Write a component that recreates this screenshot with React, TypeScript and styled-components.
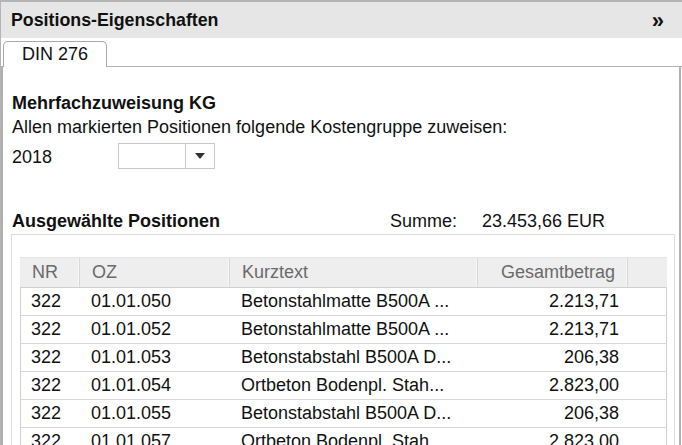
import React from 'react';
import styled, { createGlobalStyle } from 'styled-components';

const GlobalStyle = createGlobalStyle`
  html, body {
    margin: 0;
    padding: 0;
    background: #ffffff;
    overflow: hidden;
  }
  body {
    font-family: "Liberation Sans", Arial, sans-serif;
    font-size: 18px;
    color: #111;
  }
`;

const Frame = styled.div`
  width: 682px;
  height: 445px;
  box-sizing: border-box;
  border-top: 2px solid #b4b4b4;
  border-left: 1px solid #b4b4b4;
  display: flex;
  flex-direction: column;
  overflow: hidden;
`;

const TitleBar = styled.div`
  height: 36px;
  flex: none;
  background: #e6e6e6;
  display: flex;
  align-items: center;
  justify-content: space-between;
  padding: 0 18px 0 10px;
`;

const Title = styled.h1`
  margin: 0;
  font-size: 17.8px;
  font-weight: bold;
  color: #111;
`;

const Collapse = styled.span`
  font-size: 22px;
  font-weight: bold;
  line-height: 1;
  margin-top: 1px;
`;

const TabStrip = styled.div`
  flex: none;
  height: 28px;
  display: flex;
  align-items: flex-end;
  padding-left: 2px;
  border-bottom: 1px solid #b0b0b0;
`;

type TabProps = { $active?: boolean };

const Tab = styled.div<TabProps>`
  width: 104px;
  height: 26px;
  box-sizing: border-box;
  border: 1px solid #aaaaaa;
  border-bottom: none;
  border-radius: 5px 5px 0 0;
  background: ${(p) => (p.$active ? '#ffffff' : '#eeeeee')};
  padding-left: 18px;
  line-height: 24px;
  margin-bottom: -1px;
`;

const Content = styled.div`
  flex: 1;
  border-left: 2px solid #b0b0b0;
  border-right: 2px solid #b0b0b0;
  margin-right: 1px;
  padding: 26px 0 0 9px;
`;

const SectionTitle = styled.div`
  font-weight: bold;
  line-height: 20px;
`;

const Hint = styled.div`
  line-height: 20px;
  margin-top: 4px;
`;

const FieldRow = styled.div`
  display: flex;
  align-items: center;
  height: 26px;
  margin-top: 6px;
`;

const FieldLabel = styled.span`
  width: 106px;
  line-height: 20px;
  margin-top: 2px;
`;

const Select = styled.div`
  width: 97px;
  height: 26px;
  box-sizing: border-box;
  border: 1px solid #c8c8c8;
  display: flex;
`;

const SelectValue = styled.div`
  flex: 1;
  border-right: 1px solid #c8c8c8;
`;

const SelectButton = styled.div`
  width: 28px;
  display: flex;
  align-items: center;
  justify-content: center;
`;

const Summary = styled.div`
  display: flex;
  align-items: baseline;
  line-height: 20px;
  margin-top: 42px;
`;

const SummaryTitle = styled.span`
  font-weight: bold;
  width: 378px;
`;

const SummaryLabel = styled.span`
  width: 92px;
`;

const GridBox = styled.div`
  margin: 3px 0 0 -1px;
  width: 664px;
  height: 240px;
  box-sizing: border-box;
  border: 1px solid #dcdcdc;
  padding: 22px 7px 0 8px;
`;

const Cols = '60px 150px 248px 150px 1fr';

const HeaderRow = styled.div`
  display: grid;
  grid-template-columns: ${Cols};
  height: 30px;
  background: #eeeeee;
  border-top: 1px solid #e4e4e4;
  box-sizing: border-box;
`;

type CellProps = { $right?: boolean };

const HeadCell = styled.div<CellProps>`
  color: #6a6a6a;
  line-height: 29px;
  padding: 0 ${(p) => (p.$right ? '12px' : '0')} 0 12px;
  text-align: ${(p) => (p.$right ? 'right' : 'left')};
  border-right: 1px solid #d6d6d6;
  box-shadow: inset -1px 0 0 #f8f8f8;
  &:last-child {
    border-right: none;
    box-shadow: none;
  }
`;

const Body = styled.div`
  border: 1px solid #d0d0d0;
  border-bottom: none;
`;

const Row = styled.div`
  display: grid;
  grid-template-columns: ${Cols};
  height: 28px;
  box-sizing: border-box;
  border-bottom: 1px solid #d8d8d8;
  margin-left: -1px;
  margin-right: -1px;
`;

const Cell = styled.div<CellProps>`
  line-height: 27px;
  padding: 0 ${(p) => (p.$right ? '9px' : '0')} 0 11px;
  text-align: ${(p) => (p.$right ? 'right' : 'left')};
  white-space: nowrap;
  overflow: hidden;
`;

const rows = [
  ['322', '01.01.050', 'Betonstahlmatte B500A ...', '2.213,71'],
  ['322', '01.01.052', 'Betonstahlmatte B500A ...', '2.213,71'],
  ['322', '01.01.053', 'Betonstabstahl B500A D...', '206,38'],
  ['322', '01.01.054', 'Ortbeton Bodenpl. Stah...', '2.823,00'],
  ['322', '01.01.055', 'Betonstabstahl B500A D...', '206,38'],
  ['322', '01.01.057', 'Ortbeton Bodenpl. Stah...', '2.823,00'],
];

const App = () => (
  <>
    <GlobalStyle />
    <Frame>
      <TitleBar>
        <Title>Positions-Eigenschaften</Title>
        <Collapse>»</Collapse>
      </TitleBar>
      <TabStrip>
        <Tab $active>DIN 276</Tab>
      </TabStrip>
      <Content>
        <SectionTitle>Mehrfachzuweisung KG</SectionTitle>
        <Hint>Allen markierten Positionen folgende Kostengruppe zuweisen:</Hint>
        <FieldRow>
          <FieldLabel>2018</FieldLabel>
          <Select>
            <SelectValue />
            <SelectButton>
              <svg width="10" height="6" viewBox="0 0 10 6">
                <path d="M0 0h10L5 6z" fill="#333" />
              </svg>
            </SelectButton>
          </Select>
        </FieldRow>
        <Summary>
          <SummaryTitle>Ausgewählte Positionen</SummaryTitle>
          <SummaryLabel>Summe:</SummaryLabel>
          <span>23.453,66 EUR</span>
        </Summary>
        <GridBox>
          <HeaderRow>
            <HeadCell>NR</HeadCell>
            <HeadCell>OZ</HeadCell>
            <HeadCell>Kurztext</HeadCell>
            <HeadCell $right>Gesamtbetrag</HeadCell>
            <HeadCell />
          </HeaderRow>
          <Body>
            {rows.map((r) => (
              <Row key={r[1]}>
                <Cell>{r[0]}</Cell>
                <Cell>{r[1]}</Cell>
                <Cell>{r[2]}</Cell>
                <Cell $right>{r[3]}</Cell>
                <Cell />
              </Row>
            ))}
          </Body>
        </GridBox>
      </Content>
    </Frame>
  </>
);

export default App;
